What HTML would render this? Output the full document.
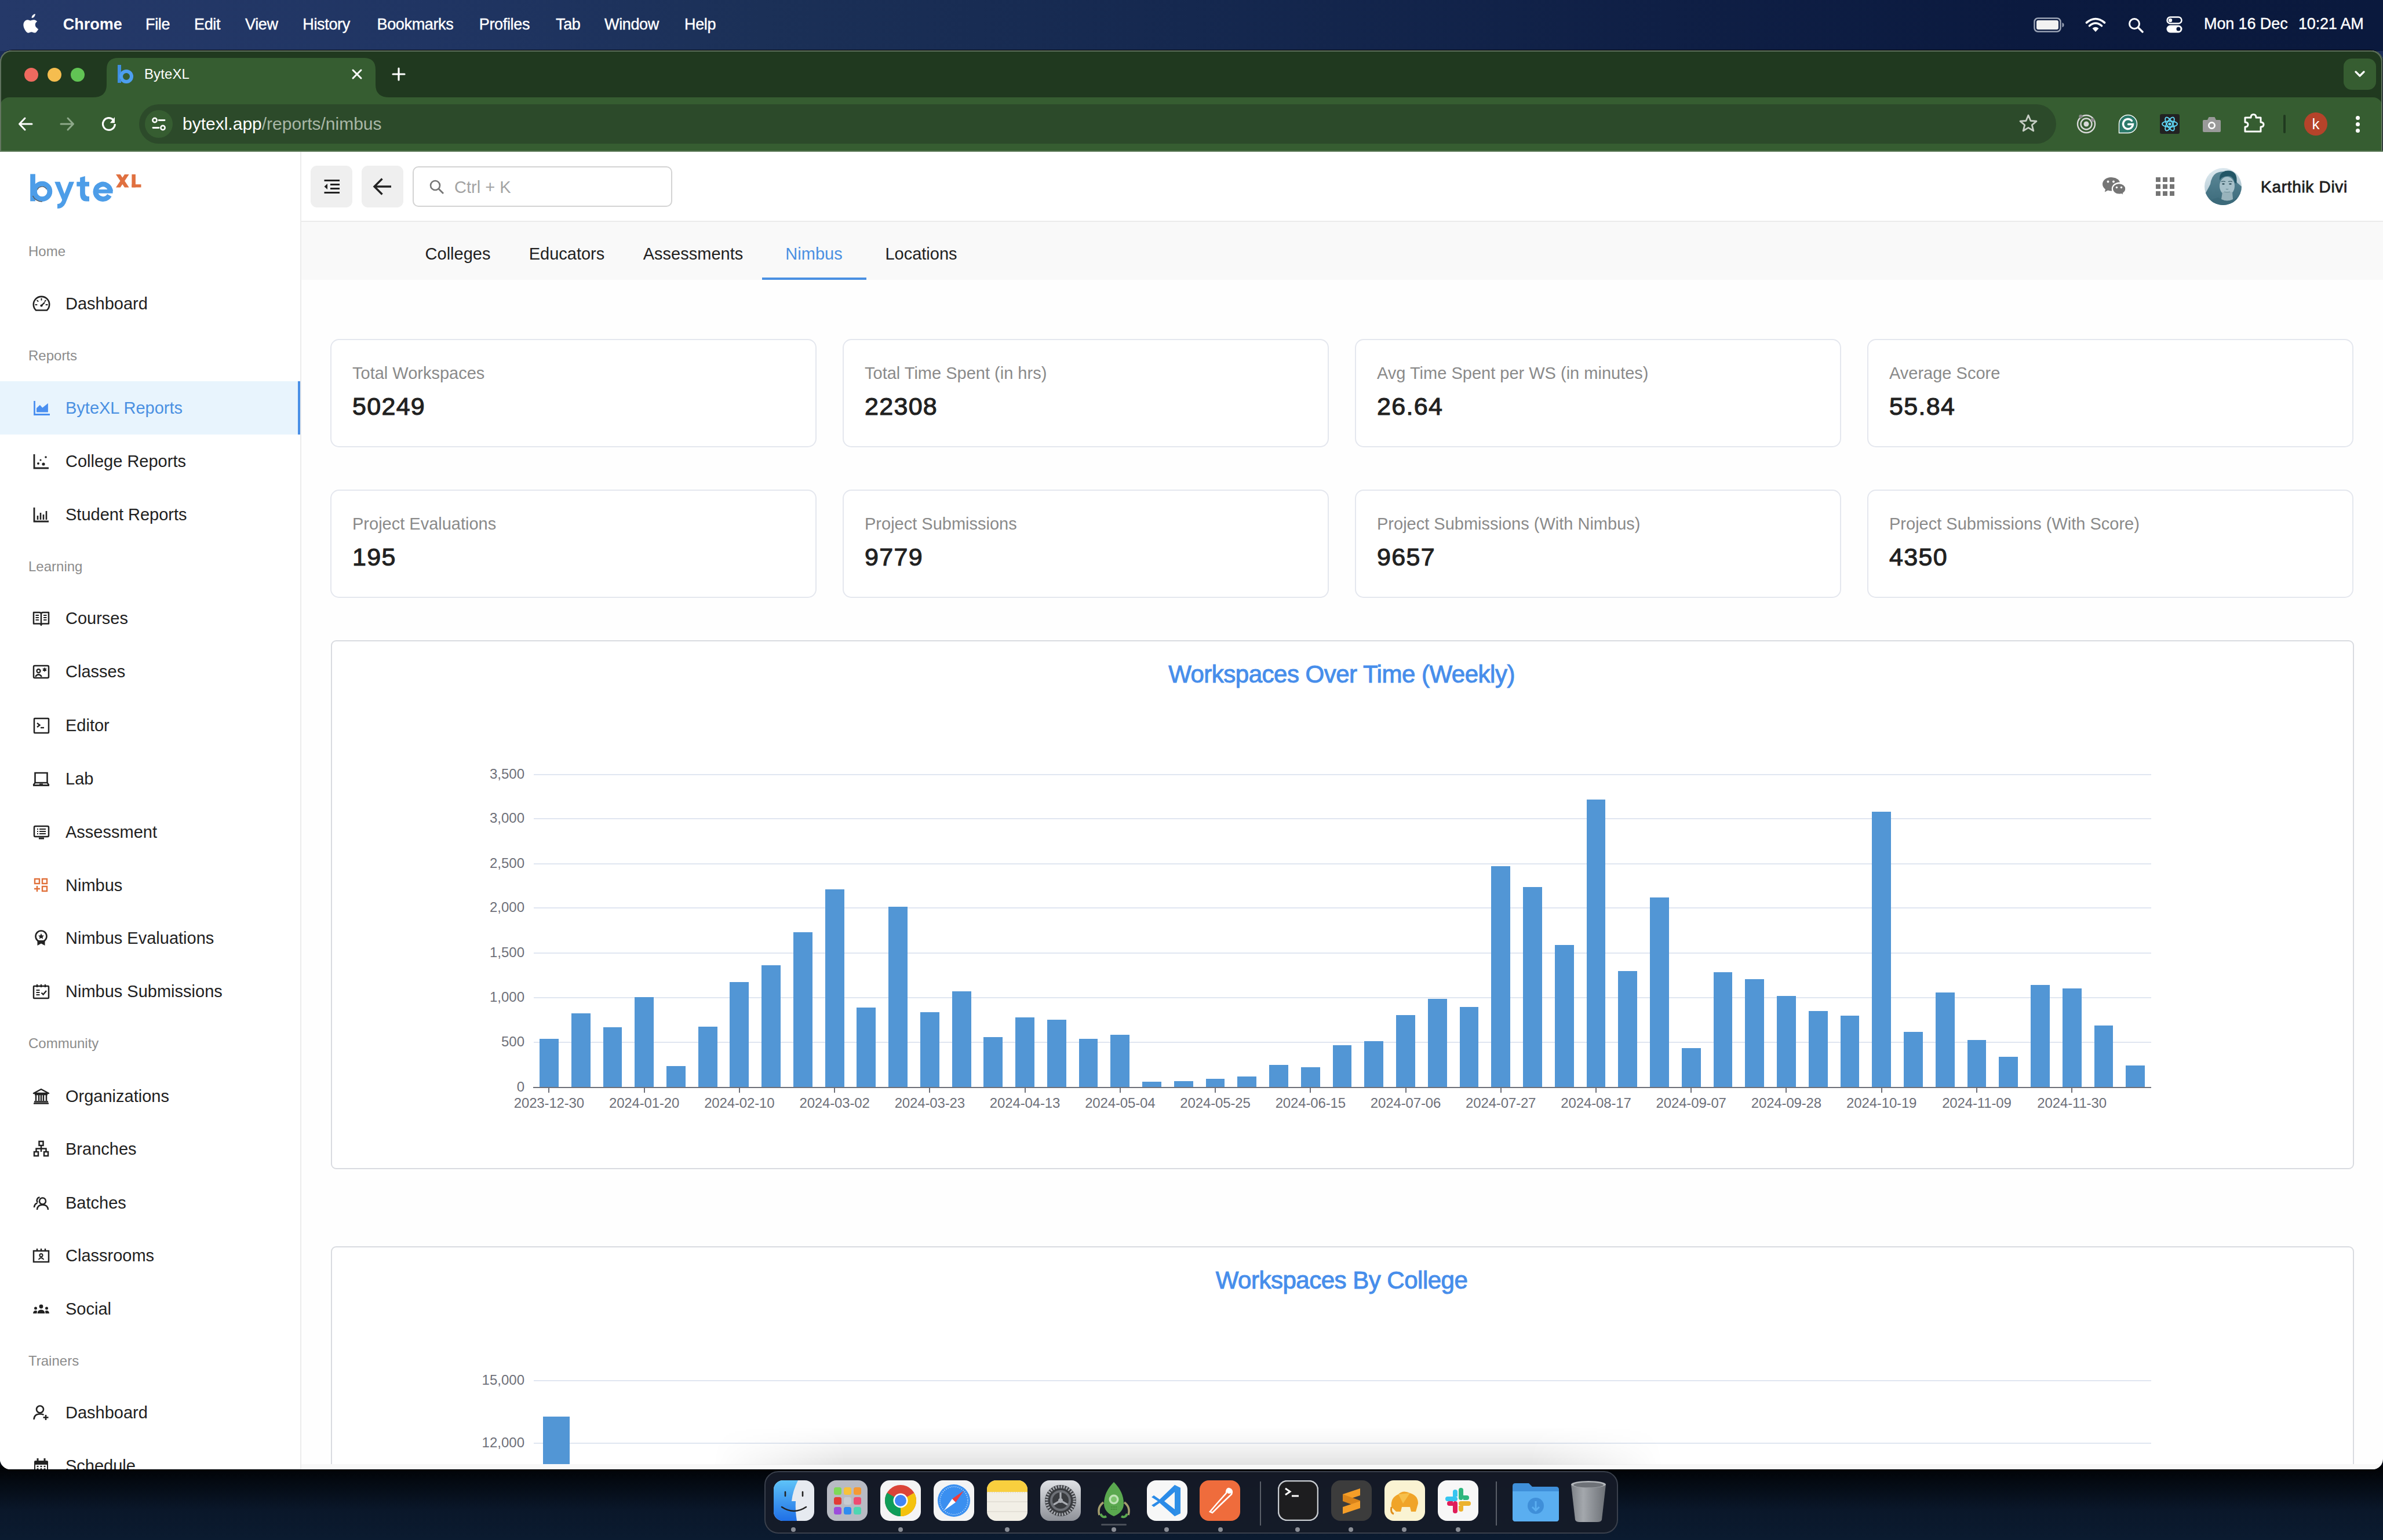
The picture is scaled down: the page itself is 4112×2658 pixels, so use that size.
<!DOCTYPE html>
<html><head><meta charset="utf-8"><title>ByteXL</title>
<style>
*{box-sizing:border-box;margin:0;padding:0}
html,body{width:4112px;height:2658px;overflow:hidden;background:#060b14}
body{font-family:"Liberation Sans",sans-serif;position:relative}
.abs{position:absolute}
.t{position:absolute;white-space:nowrap;line-height:1}
#desk{position:absolute;left:0;top:0;width:4112px;height:2658px;background:linear-gradient(180deg,#1d2f5a 0%,#0b1830 40%,#050a12 94%,#0a1424 100%)}
#menubar{position:absolute;left:0;top:0;width:4112px;height:88px;background:linear-gradient(90deg,#253969 0%,#203563 18%,#1b3057 32%,#15284f 50%,#0f1f45 70%,#0b1a3f 85%,#0a193d 100%)}
.mb{position:absolute;top:30px;font-size:27px;color:#fff;line-height:1;white-space:nowrap}
#win{position:absolute;left:0;top:87px;width:4111px;height:2449px;border-radius:20px 20px 18px 18px;overflow:hidden;background:#fff;box-shadow:0 0 0 1px rgba(0,0,0,.6)}
#tabstrip{position:absolute;left:0;top:0;width:4111px;height:81px;background:#20391f;border-top:2px solid #6f806c}
#toolbar{position:absolute;left:0;top:80px;width:4111px;height:94px;background:#365d31}
#page{position:absolute;left:0;top:174px;width:4111px;height:2275px;background:#fdfdfd}
</style></head><body>
<div id="desk"></div>
<div class="abs" style="left:0;top:2530px;width:4112px;height:128px;background:linear-gradient(180deg,#010204 0%,#040a12 22%,#0a172a 60%,#0b1b30 100%)"></div>
<div id="menubar"></div>
<svg class="abs" style="left:40px;top:24px" width="28" height="33" viewBox="0 0 170 200"><path fill="#fff" d="M150.4 155.9c-2.9 6.7-6.3 12.8-10.3 18.5-5.4 7.7-9.8 13.1-13.2 16-5.3 4.9-11 7.4-17.1 7.5-4.4 0-9.6-1.2-15.8-3.8-6.2-2.5-11.9-3.8-17.1-3.8-5.5 0-11.3 1.3-17.6 3.8-6.3 2.5-11.3 3.9-15.2 4-5.8.2-11.6-2.3-17.4-7.7-3.7-3.2-8.3-8.8-13.9-16.6C7.2 165.5 2.3 156.6-1.5 146.6c-4.1-10.9-6.2-21.4-6.2-31.6 0-11.7 2.5-21.8 7.6-30.2 4-6.8 9.3-12.2 16-16.2 6.7-4 13.9-6 21.7-6.1 4.2 0 9.8 1.3 16.7 3.9 6.9 2.6 11.3 3.9 13.3 3.9 1.5 0 6.4-1.5 14.8-4.6 7.9-2.9 14.6-4.1 20.1-3.6 14.9 1.2 26.1 7.1 33.5 17.6-13.3 8.1-19.9 19.4-19.8 33.9.1 11.3 4.2 20.7 12.3 28.2 3.7 3.5 7.8 6.2 12.4 8.1-1 2.9-2 5.6-3.1 8.3zM116.3 3.6c0 8.9-3.2 17.1-9.7 24.7-7.8 9.1-17.2 14.3-27.4 13.5-.1-1.1-.2-2.2-.2-3.4 0-8.5 3.7-17.6 10.3-25.1 3.3-3.8 7.5-6.9 12.5-9.4 5-2.5 9.8-3.8 14.3-4.1.1 1.3.2 2.5.2 3.8z" transform="translate(10,0)"/></svg>
<div class="t " style="left:108.7px;top:29.4px;font-size:27px;color:#fff;font-weight:700;">Chrome</div>
<div class="t " style="left:251.0px;top:29.4px;font-size:27px;color:#fff;font-weight:400;letter-spacing:-0.35px;-webkit-text-stroke:0.4px #fff;">File</div>
<div class="t " style="left:335.0px;top:29.4px;font-size:27px;color:#fff;font-weight:400;letter-spacing:-0.35px;-webkit-text-stroke:0.4px #fff;">Edit</div>
<div class="t " style="left:423.0px;top:29.4px;font-size:27px;color:#fff;font-weight:400;letter-spacing:-0.35px;-webkit-text-stroke:0.4px #fff;">View</div>
<div class="t " style="left:522.3px;top:29.4px;font-size:27px;color:#fff;font-weight:400;letter-spacing:-0.35px;-webkit-text-stroke:0.4px #fff;">History</div>
<div class="t " style="left:650.5px;top:29.4px;font-size:27px;color:#fff;font-weight:400;letter-spacing:-0.35px;-webkit-text-stroke:0.4px #fff;">Bookmarks</div>
<div class="t " style="left:826.8px;top:29.4px;font-size:27px;color:#fff;font-weight:400;letter-spacing:-0.35px;-webkit-text-stroke:0.4px #fff;">Profiles</div>
<div class="t " style="left:959.0px;top:29.4px;font-size:27px;color:#fff;font-weight:400;letter-spacing:-0.35px;-webkit-text-stroke:0.4px #fff;">Tab</div>
<div class="t " style="left:1043.0px;top:29.4px;font-size:27px;color:#fff;font-weight:400;letter-spacing:-0.35px;-webkit-text-stroke:0.4px #fff;">Window</div>
<div class="t " style="left:1181.0px;top:29.4px;font-size:27px;color:#fff;font-weight:400;letter-spacing:-0.35px;-webkit-text-stroke:0.4px #fff;">Help</div>
<svg class="abs" style="left:3509px;top:30px" width="54" height="26" viewBox="0 0 54 26"><rect x="1.5" y="1.5" width="45" height="23" rx="6" fill="none" stroke="#9aa3b5" stroke-width="2.5"/><rect x="5" y="5" width="38" height="16" rx="3" fill="#f2f2f2"/><path d="M49.5 9 Q52.5 10 52.5 13 Q52.5 16 49.5 17 Z" fill="#9aa3b5"/></svg>
<svg class="abs" style="left:3598px;top:30px" width="36" height="26" viewBox="0 0 36 26"><path d="M18 25 L12.5 19 Q18 14.5 23.5 19 Z" fill="#fff"/><path d="M7.5 14.5 Q18 5.5 28.5 14.5" fill="none" stroke="#fff" stroke-width="3.6" stroke-linecap="round"/><path d="M2.5 9 Q18 -4 33.5 9" fill="none" stroke="#fff" stroke-width="3.6" stroke-linecap="round"/></svg>
<svg class="abs" style="left:3672px;top:30px" width="28" height="27" viewBox="0 0 28 27"><circle cx="11" cy="11" r="8.5" fill="none" stroke="#fff" stroke-width="3"/><path d="M17.5 17.5 L25 25" stroke="#fff" stroke-width="3.4" stroke-linecap="round"/></svg>
<svg class="abs" style="left:3738px;top:28px" width="28" height="29" viewBox="0 0 28 29"><rect x="1.5" y="1.5" width="25" height="11" rx="5.5" fill="none" stroke="#fff" stroke-width="2.5"/><circle cx="7" cy="7" r="3.2" fill="#fff"/><rect x="0.5" y="15.5" width="27" height="13" rx="6.5" fill="#fff"/><circle cx="21" cy="22" r="3.5" fill="#0a1a3e"/></svg>
<div class="t " style="left:3803.0px;top:28.4px;font-size:27px;color:#fff;font-weight:400;letter-spacing:-0.1px;-webkit-text-stroke:0.4px #fff;">Mon 16 Dec</div>
<div class="t " style="left:3966.0px;top:28.4px;font-size:27px;color:#fff;font-weight:400;letter-spacing:-0.2px;-webkit-text-stroke:0.4px #fff;">10:21 AM</div>
<div class="abs" style="left:0;top:86px;width:4112px;height:40px;border-radius:21px 21px 0 0;background:#000"></div>
<div class="abs" style="left:0;top:87px;width:4112px;height:2449px;border-radius:20px 20px 18px 18px;background:#fefefe;overflow:hidden"><div class="abs" style="left:0;top:0;width:4112px;height:174px;background:#20391f"></div><div class="abs" style="left:0;top:81px;width:4111px;height:93px;border-radius:16px 16px 0 0;background:#365d31"></div><div class="abs" style="left:4111px;top:0;width:1px;height:174px;background:#0b1020"></div><div class="abs" style="left:520px;top:2440px;width:3592px;height:9px;background:#f8f8f8"></div></div>
<div class="abs" style="left:0;top:87px;width:4111px;height:174px;border-radius:20px 20px 0 0;border:2px solid #6b7b69;border-bottom:none;opacity:0.85"></div>
<div class="abs" style="left:42px;top:117px;width:24px;height:24px;border-radius:50%;background:#ee6a5f"></div>
<div class="abs" style="left:82px;top:117px;width:24px;height:24px;border-radius:50%;background:#f5bd4f"></div>
<div class="abs" style="left:122px;top:117px;width:24px;height:24px;border-radius:50%;background:#61c454"></div>
<svg class="abs" style="left:160px;top:100px" width="512" height="68" viewBox="0 0 512 68"><path d="M0 68 Q24 68 24 46 L24 20 Q24 0 44 0 L468 0 Q488 0 488 20 L488 46 Q488 68 512 68 Z" fill="#365d31"/></svg>
<svg class="abs" style="left:202px;top:112px" width="28" height="32" viewBox="0 0 28 32"><path d="M1 0 H7 V31 H1 Z" fill="#3f8ee0"/><circle cx="16" cy="20" r="9" fill="none" stroke="#4d9ff0" stroke-width="6"/><path d="M1 24 H7 V31 H1Z" fill="#3f8ee0"/></svg>
<div class="t " style="left:249.0px;top:115.7px;font-size:24px;color:#ffffff;font-weight:400;letter-spacing:0.1px;">ByteXL</div>
<svg class="abs" style="left:606px;top:118px" width="20" height="20" viewBox="0 0 20 20"><path d="M3 3 L17 17 M17 3 L3 17" stroke="#fff" stroke-width="3" stroke-linecap="round"/></svg>
<svg class="abs" style="left:676px;top:116px" width="24" height="24" viewBox="0 0 24 24"><path d="M12 2 V22 M2 12 H22" stroke="#fff" stroke-width="3.2" stroke-linecap="round"/></svg>
<div class="abs" style="left:4044px;top:101px;width:56px;height:54px;border-radius:14px;background:#365d31"></div><svg class="abs" style="left:4061px;top:120px" width="22" height="16" viewBox="0 0 22 16"><path d="M4 4 L11 11 L18 4" fill="none" stroke="#fff" stroke-width="3.2" stroke-linecap="round" stroke-linejoin="round"/></svg>
<svg class="abs" style="left:30px;top:200px" width="28" height="28" viewBox="0 0 28 28"><path d="M25 14 H4 M13 4 L3.5 14 L13 24" fill="none" stroke="#fff" stroke-width="3" stroke-linecap="round" stroke-linejoin="round"/></svg>
<svg class="abs" style="left:102px;top:200px" width="28" height="28" viewBox="0 0 28 28"><path d="M3 14 H24 M15 4 L24.5 14 L15 24" fill="none" stroke="#8ea98a" stroke-width="3" stroke-linecap="round" stroke-linejoin="round"/></svg>
<svg class="abs" style="left:174px;top:199px" width="30" height="30" viewBox="0 0 30 30"><path d="M24.3 15 A10.4 10.4 0 1 1 21.25 7.65" fill="none" stroke="#fff" stroke-width="3.2"/><path d="M24 3 V13.2 H15.8 Z" fill="#fff"/></svg>
<div class="abs" style="left:240px;top:180px;width:3308px;height:68px;border-radius:34px;background:#2c4a2a"></div>
<div class="abs" style="left:250px;top:190px;width:48px;height:48px;border-radius:50%;background:#365d31"></div>
<svg class="abs" style="left:260px;top:200px" width="28" height="28" viewBox="0 0 28 28"><circle cx="7" cy="7.5" r="3.6" fill="none" stroke="#fff" stroke-width="2.6"/><path d="M14 7.5 H24" stroke="#fff" stroke-width="2.8" stroke-linecap="round"/><circle cx="21" cy="20.5" r="3.6" fill="none" stroke="#fff" stroke-width="2.6"/><path d="M4 20.5 H14" stroke="#fff" stroke-width="2.8" stroke-linecap="round"/></svg>
<div class="t " style="left:315.0px;top:199.1px;font-size:30px;color:#ffffff;font-weight:400;">bytexl.app<span style="color:#a9b7a6">/reports/nimbus</span></div>
<svg class="abs" style="left:3483px;top:196px" width="34" height="34" viewBox="0 0 34 34"><path d="M17 3 L21 12.5 L31 13.2 L23.3 19.8 L25.8 29.8 L17 24.4 L8.2 29.8 L10.7 19.8 L3 13.2 L13 12.5 Z" fill="none" stroke="#c8cfc6" stroke-width="2.8" stroke-linejoin="round"/></svg>
<svg class="abs" style="left:3582px;top:196px" width="36" height="36" viewBox="0 0 36 36"><circle cx="18" cy="18" r="15" fill="none" stroke="#d9d9d9" stroke-width="2.4"/><circle cx="18" cy="18" r="9.5" fill="none" stroke="#d9d9d9" stroke-width="2.4"/><circle cx="18" cy="18" r="4.5" fill="#d9d9d9"/><circle cx="8.5" cy="5" r="3.2" fill="#8a8a8a"/><circle cx="29" cy="11" r="3.2" fill="#8a8a8a"/></svg>
<svg class="abs" style="left:3655px;top:197px" width="34" height="34" viewBox="0 0 34 34"><path d="M17 1.5 A15.5 15.5 0 1 1 17 32.5 H1.5 V17 A15.5 15.5 0 0 1 17 1.5 Z" fill="#2b7a6a" stroke="#fff" stroke-width="1.4"/><path d="M23.5 11.5 A8.5 8.5 0 1 0 25.5 17.5 H17.5" fill="none" stroke="#fff" stroke-width="3.4" stroke-linecap="round"/></svg>
<svg class="abs" style="left:3727px;top:197px" width="34" height="34" viewBox="0 0 34 34"><rect width="34" height="34" rx="3" fill="#222"/><g fill="none" stroke="#61dafb" stroke-width="1.8"><ellipse cx="17" cy="17" rx="13" ry="5"/><ellipse cx="17" cy="17" rx="13" ry="5" transform="rotate(60 17 17)"/><ellipse cx="17" cy="17" rx="13" ry="5" transform="rotate(120 17 17)"/></g><circle cx="17" cy="17" r="2.6" fill="#61dafb"/></svg>
<svg class="abs" style="left:3800px;top:199px" width="33" height="30" viewBox="0 0 33 30"><path d="M3 8 H9 L11.5 3 H21.5 L24 8 H30 Q32 8 32 10 V27 Q32 29 30 29 H3 Q1 29 1 27 V10 Q1 8 3 8 Z" fill="#9a9a9a"/><circle cx="16.5" cy="17.5" r="6.5" fill="#fff"/><circle cx="16.5" cy="17.5" r="3.8" fill="#9a9a9a"/></svg>
<svg class="abs" style="left:3871px;top:195px" width="37" height="35" viewBox="0 0 37 35"><path d="M3 8 H13 Q13 2.5 17.5 2.5 Q22 2.5 22 8 H30 V16 Q35 16 35 20 Q35 24 30 24 V32 H3 V24 Q8 24 8 20 Q8 16 3 16 Z" fill="none" stroke="#fff" stroke-width="3" stroke-linejoin="round"/></svg>
<div class="abs" style="left:3940px;top:198px;width:4px;height:32px;border-radius:2px;background:#203a1f"></div>
<div class="abs" style="left:3976px;top:194px;width:40px;height:40px;border-radius:50%;background:#b5432a"></div>
<div class="t " style="left:3996.0px;transform:translateX(-50%);top:201.0px;font-size:26px;color:#fff;font-weight:400;">k</div>
<div class="abs" style="left:4064.5px;top:199.5px;width:7px;height:7px;border-radius:50%;background:#fff"></div>
<div class="abs" style="left:4064.5px;top:210.5px;width:7px;height:7px;border-radius:50%;background:#fff"></div>
<div class="abs" style="left:4064.5px;top:221.5px;width:7px;height:7px;border-radius:50%;background:#fff"></div>
<div class="abs" style="left:0;top:0;width:4112px;height:2536px;overflow:hidden;clip-path:inset(262px 0 0 0 round 0 0 18px 18px)">
<div class="abs" style="left:0;top:261px;width:520px;height:2275px;background:#fff;border-right:2px solid #ececec"></div>
<svg class="abs" style="left:0;top:260px" width="260" height="110" viewBox="0 260 260 110">
<g fill="#4d9de8">
<rect x="52.2" y="300.4" width="8.7" height="46.9"/>
<path d="M94.2 313.8 H103.4 L112.5 338 L108.5 348 Z"/>
<path d="M119.3 313.8 H128 L113 351 Q108.5 360 99 360 V352 Q104.5 352 106.5 347 Z"/>
<path d="M138.1 306.5 L146.8 304 V332 Q146.8 339 152 339 H154 V347.5 H149 Q138.1 347.5 138.1 334 Z"/>
<rect x="132.3" y="313.8" width="21.7" height="7.9"/>
<rect x="169" y="327" width="25.6" height="6.7"/>
</g>
<g fill="none" stroke="#4d9de8" stroke-width="8.7">
<circle cx="72.7" cy="330.4" r="13.2"/>
<path d="M190.5 330.2 A12.8 12.8 0 1 0 188.8 337.2"/>
</g>
<path d="M56.5 338 A17.6 17.6 0 0 0 72.7 348" fill="none" stroke="#555a60" stroke-width="1.6"/>
<path d="M64.5 327.5 A8.8 8.8 0 0 1 80.5 327" fill="none" stroke="#555a60" stroke-width="1.2"/>
<g fill="#e07040">
<path d="M200 300.9 H207.6 L222.6 323.4 H215 Z"/>
<path d="M215 300.9 H222.6 L207.6 323.4 H200 Z"/>
<rect x="227.4" y="300.9" width="6.5" height="22.5"/>
<rect x="227.4" y="318.2" width="16.1" height="5.2"/>
</g></svg>
<div class="t " style="left:49.0px;top:421.7px;font-size:24px;color:#8c8c8c;font-weight:400;">Home</div>
<div class="t " style="left:49.0px;top:601.7px;font-size:24px;color:#8c8c8c;font-weight:400;">Reports</div>
<div class="t " style="left:49.0px;top:965.7px;font-size:24px;color:#8c8c8c;font-weight:400;">Learning</div>
<div class="t " style="left:49.0px;top:1788.7px;font-size:24px;color:#8c8c8c;font-weight:400;">Community</div>
<div class="t " style="left:49.0px;top:2336.7px;font-size:24px;color:#8c8c8c;font-weight:400;">Trainers</div>
<svg class="abs" style="left:55px;top:508px" width="32" height="32" viewBox="0 0 32 32"><path d="M7.1 27.5 A13.7 13.7 0 1 1 25.9 27.5 Z" fill="none" stroke="#222" stroke-width="2.6" stroke-linejoin="round"/><path d="M16.5 19.5 L21.5 14.5" stroke="#222" stroke-width="2.4" stroke-linecap="round"/><circle cx="16.5" cy="19.5" r="2.1" fill="#222"/><path d="M16.5 7.5v2.2M9.2 10.6l1.4 1.4M23.8 10.6l-1.4 1.4M6.3 18h2.2M24.5 18h2.2" stroke="#222" stroke-width="2" stroke-linecap="round"/></svg>
<div class="t " style="left:113.0px;top:509.5px;font-size:29px;color:#212121;font-weight:400;">Dashboard</div>
<div class="abs" style="left:0;top:658px;width:518px;height:92px;background:#e8f4fd"></div>
<div class="abs" style="left:514px;top:658px;width:4px;height:92px;background:#4a8fe6"></div>
<svg class="abs" style="left:55px;top:688px" width="32" height="32" viewBox="0 0 32 32"><path d="M4.5 4 V27.5 H31" fill="none" stroke="#4a8ff0" stroke-width="2.8"/><path d="M8 23.5 V16.5 L13.9 11 L18.2 15.7 L27.9 8 V23.5 Z" fill="#4a8ff0"/></svg>
<div class="t " style="left:113.0px;top:689.5px;font-size:29px;color:#4a90e2;font-weight:400;">ByteXL Reports</div>
<svg class="abs" style="left:55px;top:780px" width="32" height="32" viewBox="0 0 32 32"><path d="M4 4 V28 H29" fill="none" stroke="#222" stroke-width="2.8"/><circle cx="11" cy="20" r="2" fill="#222"/><circle cx="15" cy="14" r="1.6" fill="#222"/><circle cx="20" cy="21" r="2.6" fill="#222"/><circle cx="24" cy="9" r="1.8" fill="#222"/></svg>
<div class="t " style="left:113.0px;top:781.5px;font-size:29px;color:#212121;font-weight:400;">College Reports</div>
<svg class="abs" style="left:55px;top:872px" width="32" height="32" viewBox="0 0 32 32"><path d="M4 4 V28 H29" fill="none" stroke="#222" stroke-width="2.8"/><path d="M10 25 V18 M15 25 V13 M20 25 V16 M25 25 V10" stroke="#222" stroke-width="2.6"/></svg>
<div class="t " style="left:113.0px;top:873.5px;font-size:29px;color:#212121;font-weight:400;">Student Reports</div>
<svg class="abs" style="left:55px;top:1051px" width="32" height="32" viewBox="0 0 32 32"><path d="M3 6 H13 Q16 6 16 9 V28 Q16 25.5 13 25.5 H3 Z M29 6 H19 Q16 6 16 9 V28 Q16 25.5 19 25.5 H29 Z" fill="none" stroke="#222" stroke-width="2.5" stroke-linejoin="round"/><path d="M6.5 11h5.5M6.5 15h5.5M6.5 19h5.5M20 11h5.5M20 15h5.5M20 19h5.5" stroke="#222" stroke-width="2.2"/></svg>
<div class="t " style="left:113.0px;top:1052.5px;font-size:29px;color:#212121;font-weight:400;">Courses</div>
<svg class="abs" style="left:55px;top:1143px" width="32" height="32" viewBox="0 0 32 32"><rect x="3" y="6" width="26" height="21" rx="2" fill="none" stroke="#222" stroke-width="2.5"/><circle cx="11.5" cy="15" r="3" fill="none" stroke="#222" stroke-width="2.3"/><path d="M6 25 Q11.5 17.5 17 25" fill="none" stroke="#222" stroke-width="2.3"/><path d="M22 9.5 V16 M19 11 L25 14.5 M25 11 L19 14.5" stroke="#222" stroke-width="2"/></svg>
<div class="t " style="left:113.0px;top:1144.5px;font-size:29px;color:#212121;font-weight:400;">Classes</div>
<svg class="abs" style="left:55px;top:1236px" width="32" height="32" viewBox="0 0 32 32"><rect x="4" y="4" width="25" height="25" rx="1" fill="none" stroke="#222" stroke-width="2.5"/><path d="M9 12 L13.5 15.5 L9 19" fill="none" stroke="#222" stroke-width="2.3"/><path d="M15 20 H21" stroke="#222" stroke-width="2.3"/></svg>
<div class="t " style="left:113.0px;top:1237.5px;font-size:29px;color:#212121;font-weight:400;">Editor</div>
<svg class="abs" style="left:55px;top:1328px" width="32" height="32" viewBox="0 0 32 32"><path d="M5.5 6 H26.5 V23 H5.5 Z" fill="none" stroke="#222" stroke-width="2.6"/><path d="M2 27.5 H30" stroke="#222" stroke-width="2.8"/><path d="M2.5 27 L5.5 23 M29.5 27 L26.5 23" stroke="#222" stroke-width="2.4"/><path d="M13 25.5 H19" stroke="#222" stroke-width="2"/></svg>
<div class="t " style="left:113.0px;top:1329.5px;font-size:29px;color:#212121;font-weight:400;">Lab</div>
<svg class="abs" style="left:55px;top:1420px" width="32" height="32" viewBox="0 0 32 32"><rect x="4" y="6" width="25" height="18" rx="2" fill="none" stroke="#222" stroke-width="2.5"/><path d="M9 11h2M13 11h11M9 15h2M13 15h11M9 19h2M13 19h11" stroke="#222" stroke-width="2"/><path d="M12 27 H21" stroke="#222" stroke-width="3"/></svg>
<div class="t " style="left:113.0px;top:1421.5px;font-size:29px;color:#212121;font-weight:400;">Assessment</div>
<svg class="abs" style="left:55px;top:1512px" width="32" height="32" viewBox="0 0 32 32"><rect x="5" y="5" width="8" height="8" fill="none" stroke="#e0703a" stroke-width="2.4"/><rect x="18" y="5" width="8" height="8" fill="none" stroke="#e0703a" stroke-width="2.4"/><rect x="18" y="18" width="8" height="8" fill="none" stroke="#e0703a" stroke-width="2.4"/><path d="M9 17 V27 M4 22 H14" stroke="#e0703a" stroke-width="2.4"/></svg>
<div class="t " style="left:113.0px;top:1513.5px;font-size:29px;color:#212121;font-weight:400;">Nimbus</div>
<svg class="abs" style="left:55px;top:1603px" width="32" height="32" viewBox="0 0 32 32"><circle cx="16" cy="13" r="9.5" fill="none" stroke="#222" stroke-width="2.6"/><path d="M16 8 L17.6 11.4 L21 11.8 L18.5 14.1 L19.2 17.5 L16 15.8 L12.8 17.5 L13.5 14.1 L11 11.8 L14.4 11.4 Z" fill="#222"/><path d="M9.5 20 V29 L16 25.5 L22.5 29 V20" fill="#222"/></svg>
<div class="t " style="left:113.0px;top:1604.5px;font-size:29px;color:#212121;font-weight:400;">Nimbus Evaluations</div>
<svg class="abs" style="left:55px;top:1695px" width="32" height="32" viewBox="0 0 32 32"><rect x="3" y="7" width="26" height="21" rx="1" fill="none" stroke="#222" stroke-width="2.5"/><path d="M9 4V9M16 4V9M23 4V9" stroke="#222" stroke-width="2.4"/><path d="M7.5 14h6M7.5 18h6M7.5 22h6" stroke="#222" stroke-width="2"/><path d="M16.5 18.5 L19.5 21.5 L25 15" fill="none" stroke="#222" stroke-width="2.4"/></svg>
<div class="t " style="left:113.0px;top:1696.5px;font-size:29px;color:#212121;font-weight:400;">Nimbus Submissions</div>
<svg class="abs" style="left:55px;top:1876px" width="32" height="32" viewBox="0 0 32 32"><path d="M3 11 L16 4 L29 11 Z" fill="none" stroke="#222" stroke-width="2.5" stroke-linejoin="round"/><path d="M5 13 H27 M7 14 V24 M12 14 V24 M16 14 V24 M20 14 V24 M25 14 V24 M4 25.5 H28 M3 28.5 H29" stroke="#222" stroke-width="2.5"/></svg>
<div class="t " style="left:113.0px;top:1877.5px;font-size:29px;color:#212121;font-weight:400;">Organizations</div>
<svg class="abs" style="left:55px;top:1967px" width="32" height="32" viewBox="0 0 32 32"><rect x="12.5" y="3" width="7" height="7" fill="none" stroke="#222" stroke-width="2.5"/><rect x="4" y="21" width="7" height="7" fill="none" stroke="#222" stroke-width="2.5"/><rect x="21" y="21" width="7" height="7" fill="none" stroke="#222" stroke-width="2.5"/><path d="M16 10 V21 M7.5 21 V15.5 H24.5 V21" fill="none" stroke="#222" stroke-width="2.5"/></svg>
<div class="t " style="left:113.0px;top:1968.5px;font-size:29px;color:#212121;font-weight:400;">Branches</div>
<svg class="abs" style="left:55px;top:2060px" width="32" height="32" viewBox="0 0 32 32"><circle cx="18.5" cy="13" r="5.5" fill="none" stroke="#222" stroke-width="2.5"/><path d="M9 28 Q9.5 19.5 18.5 19.5 Q27.5 19.5 28 28" fill="none" stroke="#222" stroke-width="2.5"/><path d="M13.5 6.5 A5.5 5.5 0 0 0 10 15.5 M4 24 Q4.5 17.5 9.5 16.5" fill="none" stroke="#222" stroke-width="2.5"/></svg>
<div class="t " style="left:113.0px;top:2061.5px;font-size:29px;color:#212121;font-weight:400;">Batches</div>
<svg class="abs" style="left:55px;top:2151px" width="32" height="32" viewBox="0 0 32 32"><rect x="3" y="8" width="26" height="19" fill="none" stroke="#222" stroke-width="2.5"/><path d="M9 4V9M16 4V9M23 4V9" stroke="#222" stroke-width="2.4"/><circle cx="16" cy="15.5" r="2.6" fill="none" stroke="#222" stroke-width="2"/><path d="M11.5 23 Q16 17 20.5 23" fill="none" stroke="#222" stroke-width="2"/></svg>
<div class="t " style="left:113.0px;top:2152.5px;font-size:29px;color:#212121;font-weight:400;">Classrooms</div>
<svg class="abs" style="left:55px;top:2243px" width="32" height="32" viewBox="0 0 32 32"><circle cx="16" cy="12" r="3.4" fill="#222"/><circle cx="6.5" cy="15" r="2.5" fill="#222"/><circle cx="25.5" cy="15" r="2.5" fill="#222"/><path d="M9.5 24 Q10 17.5 16 17.5 Q22 17.5 22.5 24 Z" fill="#222"/><path d="M2 24 Q2.5 19 6.5 19 Q8.5 19 9 20 L8.5 24 Z M30 24 Q29.5 19 25.5 19 Q23.5 19 23 20 L23.5 24Z" fill="#222"/></svg>
<div class="t " style="left:113.0px;top:2244.5px;font-size:29px;color:#212121;font-weight:400;">Social</div>
<svg class="abs" style="left:55px;top:2422px" width="32" height="32" viewBox="0 0 32 32"><circle cx="14" cy="10.5" r="6" fill="none" stroke="#222" stroke-width="2.6"/><path d="M3.5 28 Q4 18.5 14 18.5 Q18 18.5 20.5 20" fill="none" stroke="#222" stroke-width="2.6"/><path d="M24 20 V29 M19.5 24.5 H28.5" stroke="#222" stroke-width="2.6"/></svg>
<div class="t " style="left:113.0px;top:2423.5px;font-size:29px;color:#212121;font-weight:400;">Dashboard</div>
<svg class="abs" style="left:55px;top:2514px" width="32" height="32" viewBox="0 0 32 32"><rect x="4" y="7" width="24" height="22" rx="2" fill="#222"/><path d="M10 3V9M22 3V9" stroke="#222" stroke-width="3"/><rect x="6" y="14" width="20" height="12" fill="#fff"/><path d="M8.5 17h3M14.5 17h3M20.5 17h3M8.5 21.5h3M14.5 21.5h3M20.5 21.5h3" stroke="#222" stroke-width="2.4"/></svg>
<div class="t " style="left:113.0px;top:2515.5px;font-size:29px;color:#212121;font-weight:400;">Schedule</div>
</div>
<div class="abs" style="left:0;top:0;width:4112px;height:2536px;overflow:hidden;clip-path:inset(262px 0 0 520px round 0 0 18px 0)">
<div class="abs" style="left:520px;top:261px;width:3592px;height:122px;background:#fff;border-bottom:2px solid #ebebeb"></div>
<div class="abs" style="left:520px;top:383px;width:3592px;height:100px;background:#f9f9f9"></div>
<div class="abs" style="left:536px;top:286px;width:72px;height:72px;border-radius:11px;background:#efefef"></div>
<div class="abs" style="left:624px;top:286px;width:72px;height:72px;border-radius:11px;background:#efefef"></div>
<svg class="abs" style="left:556px;top:306px" width="32" height="32" viewBox="0 0 32 32"><path d="M3.5 5.5 H30 M14 12.5 H30 M14 19.5 H30 M3.5 26.5 H30" stroke="#222" stroke-width="2.8"/><path d="M9 11 L3.5 16 L9 21 Z" fill="#222"/></svg>
<svg class="abs" style="left:642px;top:304px" width="36" height="36" viewBox="0 0 36 36"><path d="M33 18 H5 M17.5 4.5 L4 18 L17.5 31.5" fill="none" stroke="#222" stroke-width="3.4" stroke-linejoin="miter"/></svg>
<div class="abs" style="left:712px;top:287px;width:448px;height:70px;border-radius:10px;border:2.5px solid #d3d3d3;background:#fff"></div>
<svg class="abs" style="left:740px;top:309px" width="28" height="27" viewBox="0 0 28 27"><circle cx="11" cy="11" r="8" fill="none" stroke="#757575" stroke-width="2.6"/><path d="M17 17 L25 25" stroke="#757575" stroke-width="2.8"/></svg>
<div class="t " style="left:784.0px;top:308.5px;font-size:29px;color:#a3a3a3;font-weight:400;">Ctrl + K</div>
<svg class="abs" style="left:3627px;top:304px" width="42" height="36" viewBox="0 0 42 36"><path d="M15.5 2 C7.5 2 1 7.3 1 13.8 C1 17.5 3 20.6 6 22.8 L4.8 27.5 L10.3 24.6 C12 25.2 13.7 25.5 15.5 25.5 C16.2 25.5 16.8 25.5 17.4 25.4 C17 24.3 16.8 23.1 16.8 21.9 C16.8 15.6 22.9 10.5 30.3 10.5 C30.6 10.5 30.8 10.5 31 10.5 C29.6 5.5 23.2 2 15.5 2 Z" fill="#757575"/><path d="M41 21.9 C41 16.5 35.9 12.4 29.6 12.4 C23.3 12.4 18.2 16.5 18.2 21.9 C18.2 27.2 23.3 31.4 29.6 31.4 C30.9 31.4 32.2 31.2 33.4 30.8 L37.6 33.3 L36.6 29.3 C39.2 27.600 41 24.9 41 21.9 Z" fill="#757575" stroke="#fff" stroke-width="1.6"/><circle cx="10.5" cy="9.5" r="1.9" fill="#fff"/><circle cx="20" cy="9.5" r="1.9" fill="#fff"/><circle cx="25.5" cy="19.5" r="1.7" fill="#fff"/><circle cx="33.5" cy="19.5" r="1.7" fill="#fff"/></svg>
<div class="abs" style="left:3720px;top:306px;width:8px;height:8px;background:#757575"></div>
<div class="abs" style="left:3732px;top:306px;width:8px;height:8px;background:#757575"></div>
<div class="abs" style="left:3744px;top:306px;width:8px;height:8px;background:#757575"></div>
<div class="abs" style="left:3720px;top:318px;width:8px;height:8px;background:#757575"></div>
<div class="abs" style="left:3732px;top:318px;width:8px;height:8px;background:#757575"></div>
<div class="abs" style="left:3744px;top:318px;width:8px;height:8px;background:#757575"></div>
<div class="abs" style="left:3720px;top:330px;width:8px;height:8px;background:#757575"></div>
<div class="abs" style="left:3732px;top:330px;width:8px;height:8px;background:#757575"></div>
<div class="abs" style="left:3744px;top:330px;width:8px;height:8px;background:#757575"></div>
<svg class="abs" style="left:3804px;top:290px" width="64" height="64" viewBox="0 0 64 64"><defs><linearGradient id="avg" x1="0" y1="0" x2="0.3" y2="1"><stop offset="0" stop-color="#e4eef4"/><stop offset="1" stop-color="#9fbac5"/></linearGradient><linearGradient id="avd" x1="0" y1="0" x2="0" y2="1"><stop offset="0" stop-color="#5a8796"/><stop offset="1" stop-color="#3b6a7a"/></linearGradient><clipPath id="avc"><circle cx="32" cy="32" r="32"/></clipPath></defs><g clip-path="url(#avc)"><rect width="64" height="64" fill="url(#avg)"/><path d="M0 46 Q5 38 10 28 Q12 14 20 9 Q26 6 34 6 L52 18 L56 25 L64 32 V64 H0 Z" fill="url(#avd)"/><path d="M26 21 Q25 8 36 5 Q47 3 53 10 Q57 16 55 27 L52 25 Q50 16 44 14 Q36 13 29 17 Z" fill="#235767"/><ellipse cx="39" cy="31" rx="13" ry="16" fill="#a7c1ca"/><path d="M31 41 L48 41 L49 54 Q39 59 29 54 Z" fill="#98b3bc"/><path d="M4 64 Q8 54 24 51 Q31 56 39 57 Q48 56 55 51 Q63 55 66 62 V64 Z" fill="#3c6a7a"/><path d="M26 21 Q27 11 37 9 Q48 8 53 15 Q52 12 44 13 Q35 12 29 17 Z" fill="#235767"/><ellipse cx="32.5" cy="27.5" rx="2.3" ry="1.3" fill="#2f4f5a"/><ellipse cx="44.5" cy="27.5" rx="2.3" ry="1.3" fill="#2f4f5a"/><path d="M29 23.6 Q32.5 22.2 36 23.6 M41 23.6 Q44.5 22.2 48 23.6" fill="none" stroke="#3d5f6b" stroke-width="1.3"/><path d="M37 36 Q39 37.5 41 36" fill="none" stroke="#6a8b96" stroke-width="1.2"/><path d="M34 41 Q39 42.5 44 41" fill="none" stroke="#6d8e99" stroke-width="1.2"/></g></svg>
<div class="t " style="left:3901.0px;top:308.6px;font-size:28px;color:#212121;font-weight:400;letter-spacing:0.7px;-webkit-text-stroke:0.8px #212121;">Karthik Divi</div>
<div class="t " style="left:790.0px;transform:translateX(-50%);top:424.1px;font-size:29px;color:#212121;font-weight:400;">Colleges</div>
<div class="t " style="left:978.0px;transform:translateX(-50%);top:424.1px;font-size:29px;color:#212121;font-weight:400;">Educators</div>
<div class="t " style="left:1196.0px;transform:translateX(-50%);top:424.1px;font-size:29px;color:#212121;font-weight:400;">Assessments</div>
<div class="t " style="left:1404.5px;transform:translateX(-50%);top:424.1px;font-size:29px;color:#4a90e2;font-weight:400;">Nimbus</div>
<div class="t " style="left:1589.5px;transform:translateX(-50%);top:424.1px;font-size:29px;color:#212121;font-weight:400;">Locations</div>
<div class="abs" style="left:1315px;top:479px;width:180px;height:4px;background:#4a90e2"></div>
<div class="abs" style="left:570px;top:584.5px;width:839px;height:187px;border-radius:15px;border:2px solid #e4e7ee;background:#fff"></div>
<div class="t " style="left:608.0px;top:629.7px;font-size:29px;color:#8a8a8a;font-weight:400;">Total Workspaces</div>
<div class="t " style="left:608.0px;top:680.1px;font-size:43px;color:#212121;font-weight:400;letter-spacing:1.3px;-webkit-text-stroke:1.1px #212121;">50249</div>
<div class="abs" style="left:1454px;top:584.5px;width:839px;height:187px;border-radius:15px;border:2px solid #e4e7ee;background:#fff"></div>
<div class="t " style="left:1492.0px;top:629.7px;font-size:29px;color:#8a8a8a;font-weight:400;">Total Time Spent (in hrs)</div>
<div class="t " style="left:1492.0px;top:680.1px;font-size:43px;color:#212121;font-weight:400;letter-spacing:1.3px;-webkit-text-stroke:1.1px #212121;">22308</div>
<div class="abs" style="left:2338px;top:584.5px;width:839px;height:187px;border-radius:15px;border:2px solid #e4e7ee;background:#fff"></div>
<div class="t " style="left:2376.0px;top:629.7px;font-size:29px;color:#8a8a8a;font-weight:400;">Avg Time Spent per WS (in minutes)</div>
<div class="t " style="left:2376.0px;top:680.1px;font-size:43px;color:#212121;font-weight:400;letter-spacing:1.3px;-webkit-text-stroke:1.1px #212121;">26.64</div>
<div class="abs" style="left:3222px;top:584.5px;width:839px;height:187px;border-radius:15px;border:2px solid #e4e7ee;background:#fff"></div>
<div class="t " style="left:3260.0px;top:629.7px;font-size:29px;color:#8a8a8a;font-weight:400;">Average Score</div>
<div class="t " style="left:3260.0px;top:680.1px;font-size:43px;color:#212121;font-weight:400;letter-spacing:1.3px;-webkit-text-stroke:1.1px #212121;">55.84</div>
<div class="abs" style="left:570px;top:844.5px;width:839px;height:187px;border-radius:15px;border:2px solid #e4e7ee;background:#fff"></div>
<div class="t " style="left:608.0px;top:889.7px;font-size:29px;color:#8a8a8a;font-weight:400;">Project Evaluations</div>
<div class="t " style="left:608.0px;top:940.1px;font-size:43px;color:#212121;font-weight:400;letter-spacing:1.3px;-webkit-text-stroke:1.1px #212121;">195</div>
<div class="abs" style="left:1454px;top:844.5px;width:839px;height:187px;border-radius:15px;border:2px solid #e4e7ee;background:#fff"></div>
<div class="t " style="left:1492.0px;top:889.7px;font-size:29px;color:#8a8a8a;font-weight:400;">Project Submissions</div>
<div class="t " style="left:1492.0px;top:940.1px;font-size:43px;color:#212121;font-weight:400;letter-spacing:1.3px;-webkit-text-stroke:1.1px #212121;">9779</div>
<div class="abs" style="left:2338px;top:844.5px;width:839px;height:187px;border-radius:15px;border:2px solid #e4e7ee;background:#fff"></div>
<div class="t " style="left:2376.0px;top:889.7px;font-size:29px;color:#8a8a8a;font-weight:400;">Project Submissions (With Nimbus)</div>
<div class="t " style="left:2376.0px;top:940.1px;font-size:43px;color:#212121;font-weight:400;letter-spacing:1.3px;-webkit-text-stroke:1.1px #212121;">9657</div>
<div class="abs" style="left:3222px;top:844.5px;width:839px;height:187px;border-radius:15px;border:2px solid #e4e7ee;background:#fff"></div>
<div class="t " style="left:3260.0px;top:889.7px;font-size:29px;color:#8a8a8a;font-weight:400;">Project Submissions (With Score)</div>
<div class="t " style="left:3260.0px;top:940.1px;font-size:43px;color:#212121;font-weight:400;letter-spacing:1.3px;-webkit-text-stroke:1.1px #212121;">4350</div>
</div>
<div class="abs" style="left:0;top:260px;width:4112px;height:2px;background:#5d7a59"></div>
<div class="abs" style="left:0;top:0;width:4112px;height:2536px;overflow:hidden;clip-path:inset(484px 0 9px 520px)">
<div class="abs" style="left:570.5px;top:1104.5px;width:3491px;height:913px;border-radius:9px;border:2px solid #d9dbe0;background:#fff"></div>
<div class="t " style="left:2315.0px;transform:translateX(-50%);top:1142.9px;font-size:42px;color:#478eeb;font-weight:400;letter-spacing:-0.5px;-webkit-text-stroke:1px #478eeb;">Workspaces Over Time (Weekly)</div>
<div class="abs" style="left:570.5px;top:2150.5px;width:3491px;height:600px;border-radius:9px;background:#fff"></div>
<svg class="abs" style="left:0;top:0" width="4112" height="2658" viewBox="0 0 4112 2658" shape-rendering="crispEdges"><rect x="921" y="1336" width="2791" height="2" fill="#e0e6f1"/><rect x="921" y="1412" width="2791" height="2" fill="#e0e6f1"/><rect x="921" y="1490" width="2791" height="2" fill="#e0e6f1"/><rect x="921" y="1566" width="2791" height="2" fill="#e0e6f1"/><rect x="921" y="1644" width="2791" height="2" fill="#e0e6f1"/><rect x="921" y="1721" width="2791" height="2" fill="#e0e6f1"/><rect x="921" y="1798" width="2791" height="2" fill="#e0e6f1"/><rect x="931.0" y="1792.7" width="32.8" height="84.3" fill="#5296d5"/><rect x="985.7" y="1749.1" width="32.8" height="127.9" fill="#5296d5"/><rect x="1040.5" y="1772.7" width="32.8" height="104.3" fill="#5296d5"/><rect x="1095.2" y="1720.7" width="32.8" height="156.3" fill="#5296d5"/><rect x="1150.0" y="1839.6" width="32.8" height="37.4" fill="#5296d5"/><rect x="1204.7" y="1772.4" width="32.8" height="104.6" fill="#5296d5"/><rect x="1259.4" y="1694.5" width="32.8" height="182.5" fill="#5296d5"/><rect x="1314.2" y="1665.5" width="32.8" height="211.5" fill="#5296d5"/><rect x="1368.9" y="1609.1" width="32.8" height="267.9" fill="#5296d5"/><rect x="1423.7" y="1535.3" width="32.8" height="341.7" fill="#5296d5"/><rect x="1478.4" y="1738.9" width="32.8" height="138.1" fill="#5296d5"/><rect x="1533.2" y="1564.7" width="32.8" height="312.3" fill="#5296d5"/><rect x="1587.9" y="1747.3" width="32.8" height="129.7" fill="#5296d5"/><rect x="1642.7" y="1711.3" width="32.8" height="165.7" fill="#5296d5"/><rect x="1697.4" y="1789.8" width="32.8" height="87.2" fill="#5296d5"/><rect x="1752.1" y="1756.0" width="32.8" height="121.0" fill="#5296d5"/><rect x="1806.9" y="1760.0" width="32.8" height="117.0" fill="#5296d5"/><rect x="1861.6" y="1793.1" width="32.8" height="83.9" fill="#5296d5"/><rect x="1916.4" y="1786.2" width="32.8" height="90.8" fill="#5296d5"/><rect x="1971.1" y="1866.5" width="32.8" height="10.5" fill="#5296d5"/><rect x="2025.9" y="1865.8" width="32.8" height="11.2" fill="#5296d5"/><rect x="2080.6" y="1862.2" width="32.8" height="14.8" fill="#5296d5"/><rect x="2135.4" y="1857.8" width="32.8" height="19.2" fill="#5296d5"/><rect x="2190.1" y="1837.5" width="32.8" height="39.5" fill="#5296d5"/><rect x="2244.9" y="1842.2" width="32.8" height="34.8" fill="#5296d5"/><rect x="2299.6" y="1804.4" width="32.8" height="72.6" fill="#5296d5"/><rect x="2354.3" y="1796.7" width="32.8" height="80.3" fill="#5296d5"/><rect x="2409.1" y="1752.4" width="32.8" height="124.6" fill="#5296d5"/><rect x="2463.8" y="1724.0" width="32.8" height="153.0" fill="#5296d5"/><rect x="2518.6" y="1738.2" width="32.8" height="138.8" fill="#5296d5"/><rect x="2573.3" y="1494.9" width="32.8" height="382.1" fill="#5296d5"/><rect x="2628.1" y="1530.9" width="32.8" height="346.1" fill="#5296d5"/><rect x="2682.8" y="1630.5" width="32.8" height="246.5" fill="#5296d5"/><rect x="2737.6" y="1380.0" width="32.8" height="497.0" fill="#5296d5"/><rect x="2792.3" y="1676.4" width="32.8" height="200.6" fill="#5296d5"/><rect x="2847.1" y="1549.1" width="32.8" height="327.9" fill="#5296d5"/><rect x="2901.8" y="1808.7" width="32.8" height="68.3" fill="#5296d5"/><rect x="2956.5" y="1678.2" width="32.8" height="198.8" fill="#5296d5"/><rect x="3011.3" y="1689.5" width="32.8" height="187.5" fill="#5296d5"/><rect x="3066.0" y="1718.5" width="32.8" height="158.5" fill="#5296d5"/><rect x="3120.8" y="1744.6" width="32.8" height="132.4" fill="#5296d5"/><rect x="3175.5" y="1752.9" width="32.8" height="124.1" fill="#5296d5"/><rect x="3230.3" y="1401.4" width="32.8" height="475.6" fill="#5296d5"/><rect x="3285.0" y="1780.9" width="32.8" height="96.1" fill="#5296d5"/><rect x="3339.8" y="1713.0" width="32.8" height="164.0" fill="#5296d5"/><rect x="3394.5" y="1794.7" width="32.8" height="82.3" fill="#5296d5"/><rect x="3449.2" y="1823.8" width="32.8" height="53.2" fill="#5296d5"/><rect x="3504.0" y="1699.9" width="32.8" height="177.1" fill="#5296d5"/><rect x="3558.7" y="1706.0" width="32.8" height="171.0" fill="#5296d5"/><rect x="3613.5" y="1770.0" width="32.8" height="107.0" fill="#5296d5"/><rect x="3668.2" y="1839.1" width="32.8" height="37.9" fill="#5296d5"/><rect x="920" y="1876" width="2792" height="2" fill="#6e7079"/><rect x="946.4" y="1877" width="2" height="9" fill="#6e7079"/><rect x="1110.6" y="1877" width="2" height="9" fill="#6e7079"/><rect x="1274.8" y="1877" width="2" height="9" fill="#6e7079"/><rect x="1439.1" y="1877" width="2" height="9" fill="#6e7079"/><rect x="1603.3" y="1877" width="2" height="9" fill="#6e7079"/><rect x="1767.5" y="1877" width="2" height="9" fill="#6e7079"/><rect x="1931.8" y="1877" width="2" height="9" fill="#6e7079"/><rect x="2096.0" y="1877" width="2" height="9" fill="#6e7079"/><rect x="2260.3" y="1877" width="2" height="9" fill="#6e7079"/><rect x="2424.5" y="1877" width="2" height="9" fill="#6e7079"/><rect x="2588.7" y="1877" width="2" height="9" fill="#6e7079"/><rect x="2753.0" y="1877" width="2" height="9" fill="#6e7079"/><rect x="2917.2" y="1877" width="2" height="9" fill="#6e7079"/><rect x="3081.4" y="1877" width="2" height="9" fill="#6e7079"/><rect x="3245.7" y="1877" width="2" height="9" fill="#6e7079"/><rect x="3409.9" y="1877" width="2" height="9" fill="#6e7079"/><rect x="3574.1" y="1877" width="2" height="9" fill="#6e7079"/><rect x="921" y="2382" width="2791" height="2" fill="#e0e6f1"/><rect x="921" y="2490" width="2791" height="2" fill="#e0e6f1"/><rect x="936.5" y="2445" width="46.5" height="200" fill="#5296d5"/></svg>
<div class="t " style="right:3207.0px;top:1324.2px;font-size:24px;color:#6e7079;font-weight:400;">3,500</div>
<div class="t " style="right:3207.0px;top:1400.2px;font-size:24px;color:#6e7079;font-weight:400;">3,000</div>
<div class="t " style="right:3207.0px;top:1478.2px;font-size:24px;color:#6e7079;font-weight:400;">2,500</div>
<div class="t " style="right:3207.0px;top:1554.2px;font-size:24px;color:#6e7079;font-weight:400;">2,000</div>
<div class="t " style="right:3207.0px;top:1632.2px;font-size:24px;color:#6e7079;font-weight:400;">1,500</div>
<div class="t " style="right:3207.0px;top:1709.2px;font-size:24px;color:#6e7079;font-weight:400;">1,000</div>
<div class="t " style="right:3207.0px;top:1786.2px;font-size:24px;color:#6e7079;font-weight:400;">500</div>
<div class="t " style="right:3207.0px;top:1864.2px;font-size:24px;color:#6e7079;font-weight:400;">0</div>
<div class="t " style="left:947.4px;transform:translateX(-50%);top:1891.7px;font-size:24px;color:#6e7079;font-weight:400;letter-spacing:-0.15px;">2023-12-30</div>
<div class="t " style="left:1111.6px;transform:translateX(-50%);top:1891.7px;font-size:24px;color:#6e7079;font-weight:400;letter-spacing:-0.15px;">2024-01-20</div>
<div class="t " style="left:1275.8px;transform:translateX(-50%);top:1891.7px;font-size:24px;color:#6e7079;font-weight:400;letter-spacing:-0.15px;">2024-02-10</div>
<div class="t " style="left:1440.1px;transform:translateX(-50%);top:1891.7px;font-size:24px;color:#6e7079;font-weight:400;letter-spacing:-0.15px;">2024-03-02</div>
<div class="t " style="left:1604.3px;transform:translateX(-50%);top:1891.7px;font-size:24px;color:#6e7079;font-weight:400;letter-spacing:-0.15px;">2024-03-23</div>
<div class="t " style="left:1768.5px;transform:translateX(-50%);top:1891.7px;font-size:24px;color:#6e7079;font-weight:400;letter-spacing:-0.15px;">2024-04-13</div>
<div class="t " style="left:1932.8px;transform:translateX(-50%);top:1891.7px;font-size:24px;color:#6e7079;font-weight:400;letter-spacing:-0.15px;">2024-05-04</div>
<div class="t " style="left:2097.0px;transform:translateX(-50%);top:1891.7px;font-size:24px;color:#6e7079;font-weight:400;letter-spacing:-0.15px;">2024-05-25</div>
<div class="t " style="left:2261.3px;transform:translateX(-50%);top:1891.7px;font-size:24px;color:#6e7079;font-weight:400;letter-spacing:-0.15px;">2024-06-15</div>
<div class="t " style="left:2425.5px;transform:translateX(-50%);top:1891.7px;font-size:24px;color:#6e7079;font-weight:400;letter-spacing:-0.15px;">2024-07-06</div>
<div class="t " style="left:2589.7px;transform:translateX(-50%);top:1891.7px;font-size:24px;color:#6e7079;font-weight:400;letter-spacing:-0.15px;">2024-07-27</div>
<div class="t " style="left:2754.0px;transform:translateX(-50%);top:1891.7px;font-size:24px;color:#6e7079;font-weight:400;letter-spacing:-0.15px;">2024-08-17</div>
<div class="t " style="left:2918.2px;transform:translateX(-50%);top:1891.7px;font-size:24px;color:#6e7079;font-weight:400;letter-spacing:-0.15px;">2024-09-07</div>
<div class="t " style="left:3082.4px;transform:translateX(-50%);top:1891.7px;font-size:24px;color:#6e7079;font-weight:400;letter-spacing:-0.15px;">2024-09-28</div>
<div class="t " style="left:3246.7px;transform:translateX(-50%);top:1891.7px;font-size:24px;color:#6e7079;font-weight:400;letter-spacing:-0.15px;">2024-10-19</div>
<div class="t " style="left:3410.9px;transform:translateX(-50%);top:1891.7px;font-size:24px;color:#6e7079;font-weight:400;letter-spacing:-0.15px;">2024-11-09</div>
<div class="t " style="left:3575.1px;transform:translateX(-50%);top:1891.7px;font-size:24px;color:#6e7079;font-weight:400;letter-spacing:-0.15px;">2024-11-30</div>
<div class="abs" style="left:570.5px;top:2150.5px;width:3491px;height:600px;border-radius:9px;border:2px solid #d9dbe0;background:transparent"></div>
<div class="t " style="left:2315.0px;transform:translateX(-50%);top:2188.9px;font-size:42px;color:#478eeb;font-weight:400;letter-spacing:-0.5px;-webkit-text-stroke:1px #478eeb;">Workspaces By College</div>
<div class="t " style="right:3207.0px;top:2370.2px;font-size:24px;color:#6e7079;font-weight:400;">15,000</div>
<div class="t " style="right:3207.0px;top:2478.2px;font-size:24px;color:#6e7079;font-weight:400;">12,000</div>
</div>
<div class="abs" style="left:1230px;top:2462px;width:1640px;height:66px;background:linear-gradient(180deg,rgba(0,0,0,0) 0%,rgba(0,0,0,0.035) 45%,rgba(0,0,0,0.11) 100%);-webkit-mask-image:linear-gradient(90deg,transparent 0%,#000 14%,#000 86%,transparent 100%)"></div>
<div class="abs" style="left:1319px;top:2539px;width:1473px;height:108px;border-radius:24px;background:rgba(22,27,40,0.92);border:2px solid #3a404c"></div>
<svg class="abs" style="left:1335px;top:2554.5px" width="70" height="70" viewBox="0 0 70 70"><defs><linearGradient id="fb" x1="0" y1="0" x2="0" y2="1"><stop offset="0" stop-color="#5ec3f8"/><stop offset="1" stop-color="#1f6fe6"/></linearGradient><clipPath id="fc"><rect width="70" height="70" rx="16"/></clipPath></defs><g clip-path="url(#fc)"><rect width="70" height="70" fill="#e6eaf0"/><path d="M0 0 H42 Q33 18 31 36 H38 Q37 52 40 70 H0 Z" fill="url(#fb)"/></g><path d="M20 20 V27 M50 20 V27" stroke="#222" stroke-width="2.6" stroke-linecap="round"/><path d="M14 46 Q35 60 56 46" fill="none" stroke="#222" stroke-width="2.6" stroke-linecap="round"/></svg>
<svg class="abs" style="left:1427px;top:2554.5px" width="70" height="70" viewBox="0 0 70 70"><rect x="0" y="0" width="70" height="70" rx="16" fill="#b8bbc3"/><rect x="12" y="12" width="13" height="13" rx="3.5" fill="#7ed957"/><rect x="29" y="12" width="13" height="13" rx="3.5" fill="#f7c23a"/><rect x="46" y="12" width="13" height="13" rx="3.5" fill="#f49a35"/><rect x="12" y="29" width="13" height="13" rx="3.5" fill="#e23b35"/><rect x="29" y="29" width="13" height="13" rx="3.5" fill="#c7cbd0"/><rect x="46" y="29" width="13" height="13" rx="3.5" fill="#ee4c72"/><rect x="12" y="46" width="13" height="13" rx="3.5" fill="#9c4ddb"/><rect x="29" y="46" width="13" height="13" rx="3.5" fill="#2f8cf0"/><rect x="46" y="46" width="13" height="13" rx="3.5" fill="#4fd6b2"/></svg>
<svg class="abs" style="left:1519px;top:2554.5px" width="70" height="70" viewBox="0 0 70 70"><rect x="0" y="0" width="70" height="70" rx="16" fill="#f4f4f4"/><circle cx="35" cy="35" r="27" fill="#db4437"/><path d="M35 35 L58.4 21.5 A27 27 0 0 1 35 62 Z" fill="#f4c20d"/><path d="M35 35 L35 62 A27 27 0 0 1 11.6 21.5 Z" fill="#0f9d58"/><circle cx="35" cy="35" r="12.5" fill="#fff"/><circle cx="35" cy="35" r="10" fill="#4285f4"/></svg>
<svg class="abs" style="left:1611px;top:2554.5px" width="70" height="70" viewBox="0 0 70 70"><rect x="0" y="0" width="70" height="70" rx="16" fill="#f4f4f4"/><circle cx="35" cy="35" r="28" fill="#3a8ff0"/><circle cx="35" cy="35" r="24" fill="none" stroke="#fff" stroke-width="2" stroke-dasharray="1 2.5" opacity="0.8"/><path d="M52 18 L38 38 L32 32 Z" fill="#f03c3c"/><path d="M18 52 L32 32 L38 38 Z" fill="#fff"/></svg>
<svg class="abs" style="left:1703px;top:2554.5px" width="70" height="70" viewBox="0 0 70 70"><defs><clipPath id="nc"><rect width="70" height="70" rx="16"/></clipPath></defs><g clip-path="url(#nc)"><rect width="70" height="70" fill="#f2efe6"/><rect width="70" height="20" fill="#f9cf3e"/><path d="M0 21 H70" stroke="#d8d2c0" stroke-width="1" stroke-dasharray="2 2"/><path d="M0 37 H70 M0 54 H70" stroke="#d6d2c8" stroke-width="1.2"/></g></svg>
<svg class="abs" style="left:1795px;top:2554.5px" width="70" height="70" viewBox="0 0 70 70"><defs><linearGradient id="sg" x1="0" y1="0" x2="0" y2="1"><stop offset="0" stop-color="#e0e2e6"/><stop offset="1" stop-color="#8e9198"/></linearGradient></defs><rect x="0" y="0" width="70" height="70" rx="16" fill="url(#sg)"/><circle cx="35" cy="35" r="27" fill="#3a3c40"/><circle cx="35" cy="35" r="24" fill="none" stroke="#a9acb2" stroke-width="5" stroke-dasharray="2.5 2.2"/><circle cx="35" cy="35" r="18" fill="#6d7076"/><circle cx="35" cy="35" r="14" fill="#3a3c40"/><path d="M35 35 V21 M35 35 L47 42 M35 35 L23 42" stroke="#a9acb2" stroke-width="3.2"/><circle cx="35" cy="35" r="4" fill="#a9acb2"/></svg>
<svg class="abs" style="left:1887px;top:2554.5px" width="70" height="70" viewBox="0 0 70 70"><path d="M35 3 Q52 20 52 40 Q52 55 35 62 Q18 55 18 40 Q18 20 35 3 Z" fill="#5aa84f"/><circle cx="35" cy="33" r="8.5" fill="#bfe3b5"/><circle cx="35" cy="33" r="5" fill="#7cc46e"/><path d="M17 38 Q6 46 10 60 M53 38 Q64 46 60 60" fill="none" stroke="#a59f6e" stroke-width="3.5"/><path d="M12 58 Q16 66 22 62 M58 58 Q54 66 48 62" fill="none" stroke="#5aa84f" stroke-width="4"/><path d="M30 46 H40 M30 50 H40" stroke="#3e7a36" stroke-width="1.5" stroke-dasharray="1.5 1.5"/></svg>
<div class="abs" style="left:1900px;top:2630px;width:44px;height:3px;border-radius:2px;background:#4a4f58"></div>
<svg class="abs" style="left:1979px;top:2554.5px" width="70" height="70" viewBox="0 0 70 70"><rect x="0" y="0" width="70" height="70" rx="16" fill="#f7f7f7"/><path d="M48 8 L58 13 V57 L48 62 Z" fill="#1f7fd8"/><path d="M48 8 L22 33 L12 26 L8 29 L19 36 L8 43 L12 46 L22 39 L48 62 V50 L30 36 L48 20 Z" fill="#2a8be8"/><path d="M48 8 L58 13 V57 L48 62 Z" fill="#3b9af0" opacity="0.6"/></svg>
<svg class="abs" style="left:2070px;top:2554.5px" width="70" height="70" viewBox="0 0 70 70"><rect x="0" y="0" width="70" height="70" rx="16" fill="#ef6c3c"/><path d="M50 14 Q58 16 55 24 L34 44 L22 56 L18 54 L30 40 L46 22 Q46 15 50 14Z" fill="none" stroke="#fff" stroke-width="2.6"/><circle cx="51" cy="19" r="4" fill="#fff"/></svg>
<div class="abs" style="left:2174px;top:2557px;width:2px;height:76px;background:#5a5f68"></div>
<svg class="abs" style="left:2205px;top:2554.5px" width="70" height="70" viewBox="0 0 70 70"><rect x="1" y="1" width="68" height="68" rx="15" fill="#1d1d1f" stroke="#c9cdd2" stroke-width="2.5"/><path d="M13 14 L21 19.5 L13 25" fill="none" stroke="#fff" stroke-width="3"/><path d="M24 27 H36" stroke="#fff" stroke-width="3"/></svg>
<svg class="abs" style="left:2297px;top:2554.5px" width="70" height="70" viewBox="0 0 70 70"><rect x="0" y="0" width="70" height="70" rx="16" fill="#3c3c3c"/><path d="M20 24 L50 14 V26 L20 36 Z" fill="#f59e28"/><path d="M20 24 L50 35 V47 L20 36 Z" fill="#d9841a"/><path d="M20 46 L50 36 V48 L20 58 Z" fill="#f59e28"/></svg>
<svg class="abs" style="left:2389px;top:2554.5px" width="70" height="70" viewBox="0 0 70 70"><rect x="0" y="0" width="70" height="70" rx="16" fill="#faf3d2"/><path d="M12 46 Q10 30 24 24 Q32 16 44 22 Q58 26 58 40 L54 54 H46 L44 46 H30 L28 54 H20 Z" fill="#f0a428"/><path d="M24 24 L32 40 L44 22 Z" fill="#f7c04a"/><path d="M12 46 Q10 56 16 58" fill="none" stroke="#e08e1a" stroke-width="3"/></svg>
<svg class="abs" style="left:2481px;top:2554.5px" width="70" height="70" viewBox="0 0 70 70"><rect x="0" y="0" width="70" height="70" rx="16" fill="#f7f7f7"/><rect x="13" y="28" width="21" height="8" rx="4" fill="#36c5f0"/><path d="M26 28 V20 A4 4 0 0 1 34 20 V28 Z" fill="#36c5f0"/><rect x="36" y="13" width="8" height="21" rx="4" fill="#2eb67d"/><path d="M44 26 H50 A4 4 0 0 1 50 34 H44 Z" fill="#2eb67d"/><rect x="36" y="36" width="21" height="8" rx="4" fill="#ecb22e"/><path d="M36 44 V50 A4 4 0 0 0 44 50 V44 Z" fill="#ecb22e"/><rect x="26" y="36" width="8" height="21" rx="4" fill="#e01e5a"/><path d="M26 36 H20 A4 4 0 0 0 20 44 H26 Z" fill="#e01e5a"/></svg>
<div class="abs" style="left:2581px;top:2557px;width:2px;height:76px;background:#5a5f68"></div>
<svg class="abs" style="left:2608px;top:2557px" width="84" height="70" viewBox="0 0 84 70"><path d="M2 8 Q2 3 7 3 H30 L36 9 H77 Q82 9 82 14 V64 Q82 69 77 69 H7 Q2 69 2 64 Z" fill="#3f8fd9"/><path d="M2 17 H82 V64 Q82 69 77 69 H7 Q2 69 2 64 Z" fill="#5aaef0"/><circle cx="42" cy="42" r="14" fill="#3f8fd9"/><path d="M42 34 V49 M36 44 L42 50 L48 44" fill="none" stroke="#5aaef0" stroke-width="3"/></svg>
<svg class="abs" style="left:2708px;top:2553px" width="66" height="76" viewBox="0 0 66 76"><defs><linearGradient id="tg" x1="0" y1="0" x2="1" y2="0"><stop offset="0" stop-color="#7d8187"/><stop offset="0.35" stop-color="#a4a8ad"/><stop offset="1" stop-color="#6c7076"/></linearGradient></defs><path d="M3 9 L10 70 Q11 74 18 74 H48 Q55 74 56 70 L63 9 Z" fill="url(#tg)"/><ellipse cx="33" cy="9" rx="30" ry="6" fill="#b4b8bc"/><ellipse cx="33" cy="10" rx="26" ry="4.5" fill="#6e7278"/></svg>
<div class="abs" style="left:1365px;top:2636px;width:8px;height:8px;border-radius:50%;background:#8a8e96"></div>
<div class="abs" style="left:1549.7px;top:2636px;width:8px;height:8px;border-radius:50%;background:#8a8e96"></div>
<div class="abs" style="left:1733.5px;top:2636px;width:8px;height:8px;border-radius:50%;background:#8a8e96"></div>
<div class="abs" style="left:1918px;top:2636px;width:8px;height:8px;border-radius:50%;background:#8a8e96"></div>
<div class="abs" style="left:2009px;top:2636px;width:8px;height:8px;border-radius:50%;background:#8a8e96"></div>
<div class="abs" style="left:2101.7px;top:2636px;width:8px;height:8px;border-radius:50%;background:#8a8e96"></div>
<div class="abs" style="left:2235px;top:2636px;width:8px;height:8px;border-radius:50%;background:#8a8e96"></div>
<div class="abs" style="left:2327px;top:2636px;width:8px;height:8px;border-radius:50%;background:#8a8e96"></div>
<div class="abs" style="left:2419px;top:2636px;width:8px;height:8px;border-radius:50%;background:#8a8e96"></div>
<div class="abs" style="left:2511.5px;top:2636px;width:8px;height:8px;border-radius:50%;background:#8a8e96"></div>
</body></html>
